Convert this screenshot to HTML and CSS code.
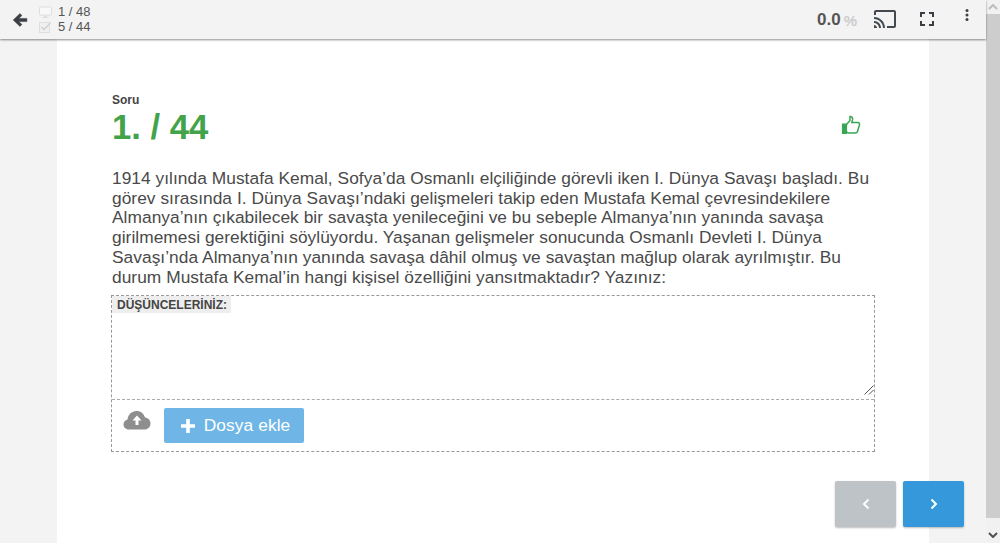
FILE: index.html
```html
<!DOCTYPE html>
<html lang="tr">
<head>
<meta charset="utf-8">
<title>Soru</title>
<link rel="stylesheet" href="styles.css">
</head>
<body>
<div class="app">
  <div class="main">
    <header class="topbar">
      <svg class="back" viewBox="0 0 16 16" width="16" height="16"><path d="M8 1.6 1.2 8 8 14.4l1.9-1.9-3-2.9h8v-3.2h-8l3-2.9z" fill="#3a3f45" stroke="#3a3f45" stroke-width=".5" stroke-linejoin="round"/></svg>
      <div class="counters">
        <div class="counter">
          <svg viewBox="0 0 13 12" width="13" height="12"><path d="M1 1h11a.5.5 0 0 1 .5.5v7a.5.5 0 0 1-.5.5H1a.5.5 0 0 1-.5-.5v-7A.5.5 0 0 1 1 1z" fill="#f8f8f8" stroke="#dedede"/><path d="M5 9.500h3V11h1.500v1h-6v-1H5z" fill="#dedede"/></svg>
          <span>1 / 48</span>
        </div>
        <div class="counter">
          <svg viewBox="0 0 13 12" width="13" height="12"><rect x=".5" y="1.500" width="10" height="10" fill="#f0f0f0" stroke="#dedede"/><path d="m2.500 6 2.500 2.500L11.500 2" fill="none" stroke="#d0d0d0" stroke-width="1.500"/></svg>
          <span>5 / 44</span>
        </div>
      </div>
      <div class="score"><b>0.0</b><span>%</span></div>
      <svg class="cast" viewBox="0 0 24 24" width="24" height="24"><path d="M21 3H3c-1.100 0-2 .9-2 2v3h2V5h18v14h-7v2h7c1.100 0 2-.9 2-2V5c0-1.100-.9-2-2-2zM1 18v3h3c0-1.660-1.340-3-3-3zm0-4v2c2.760 0 5 2.240 5 5h2c0-3.870-3.130-7-7-7zm0-4v2c4.970 0 9 4.030 9 9h2c0-6.080-4.930-11-11-11z" fill="#44494f"/></svg>
      <svg class="full" viewBox="0 0 24 24" width="24" height="24"><path d="M7 14H5v5h5v-2H7v-3zm-2-4h2V7h3V5H5v5zm12 7h-3v2h5v-5h-2v3zM14 5v2h3v3h2V5h-5z" fill="#3a3f45"/></svg>
      <svg class="dots" viewBox="0 0 4 12" width="4" height="12"><circle cx="2" cy="1.500" r="1.500" fill="#3a3f45"/><circle cx="2" cy="6" r="1.500" fill="#3a3f45"/><circle cx="2" cy="10.500" r="1.500" fill="#3a3f45"/></svg>
    </header>
    <div class="stage">
      <main class="card">
        <div class="head">
          <div>
            <div class="label">Soru</div>
            <div class="number">1. / 44</div>
          </div>
          <svg class="thumb" viewBox="0 0 20 20" width="20" height="20"><path d="M1.500 9h4v9.500h-4z" fill="#3aa655" stroke="#3aa655" stroke-width="1.200"/><path d="M5.500 9.500 9 5.500V1.500c2 0 3 1.500 2.500 3.500l-.7 2.500h6c1.500 0 2 1.200 1.600 2.500l-1.900 6.500c-.3 1-1 1.500-2 1.500H8c-1 0-1.700-.5-2.500-1" fill="none" stroke="#3aa655" stroke-width="1.500"/></svg>
        </div>
        <p class="question">1914 yılında Mustafa Kemal, Sofya’da Osmanlı elçiliğinde görevli iken I. Dünya Savaşı başladı. Bu görev sırasında I. Dünya Savaşı’ndaki gelişmeleri takip eden Mustafa Kemal çevresindekilere Almanya’nın çıkabilecek bir savaşta yenileceğini ve bu sebeple Almanya’nın yanında savaşa girilmemesi gerektiğini söylüyordu. Yaşanan gelişmeler sonucunda Osmanlı Devleti I. Dünya Savaşı’nda Almanya’nın yanında savaşa dâhil olmuş ve savaştan mağlup olarak ayrılmıştır. Bu durum Mustafa Kemal’in hangi kişisel özelliğini yansıtmaktadır? Yazınız:</p>
        <section class="answer">
          <div class="editor">
            <span class="tag">DÜŞÜNCELERİNİZ:</span>
            <svg class="grip" viewBox="0 0 10 10" width="10" height="10"><path d="M9.500.5l-9 9M9.500 5l-4.500 4.500" stroke="#555" fill="none"/></svg>
          </div>
          <div class="upload">
            <svg class="cloud" viewBox="0 0 28 20" width="28" height="20"><path d="M6 19.500C2.500 19.500.5 17 .5 14.500c0-2.500 1.700-4.500 4-5C5 5 8.500 1 13.500 1c4.200 0 7.500 2.700 8.500 6.500 3.300.3 5.500 3 5.500 6 0 3.500-2.700 6-6 6z" fill="#8e8e8e"/><path d="M14 5.500 9.500 10.500h3V15h3v-4.500h3z" fill="#fff"/></svg>
            <button class="add" type="button"><svg viewBox="0 0 14 14" width="14" height="14"><path d="M5.200 0h3.600v5.200H14v3.600H8.800V14H5.200V8.800H0V5.200h5.200z" fill="#fff"/></svg>Dosya ekle</button>
          </div>
        </section>
        <nav class="pager">
          <button class="page prev" type="button"><svg viewBox="0 0 8 12" width="8" height="12"><path d="M6.500 1.500 2 6l4.500 4.500" fill="none" stroke="#fff" stroke-width="2"/></svg></button>
          <button class="page next" type="button"><svg viewBox="0 0 8 12" width="8" height="12"><path d="M1.500 1.500 6 6l-4.500 4.500" fill="none" stroke="#fff" stroke-width="2"/></svg></button>
        </nav>
      </main>
    </div>
  </div>
  <aside class="scrollbar">
    <div class="arrow top"><svg viewBox="0 0 10 6" width="10" height="6"><path d="M1 5l4-4 4 4" fill="none" stroke="#bdbdbd" stroke-width="2"/></svg></div>
    <div class="track"></div>
    <div class="arrow"><svg viewBox="0 0 10 6" width="10" height="6"><path d="M1 1l4 4 4-4" fill="none" stroke="#505050" stroke-width="2"/></svg></div>
  </aside>
</div>
</body>
</html>
```
FILE: styles.css
```css
* { box-sizing: border-box; }
html, body { margin: 0; height: 100%; overflow: hidden; }
body { font-family: "Liberation Sans", Arial, sans-serif; color: #444; background: #f3f3f3; }
.app { display: flex; height: 543px; }
.main { flex: 1; display: flex; flex-direction: column; min-width: 0; }
.topbar { height: 39px; flex: none; display: flex; align-items: center; background: #f3f3f3; box-shadow: 0 1px 2px rgba(0,0,0,.45); position: relative; z-index: 2; padding-left: 12px; }
.back { margin-right: 11px; }
.counters { display: flex; flex-direction: column; font-size: 13px; line-height: 15px; color: #555; margin-bottom: 1px; }
.counter { display: flex; align-items: center; gap: 6px; }
.score { margin-left: auto; margin-right: 16px; font-size: 17px; color: #555; }
.score span { color: #ccc; font-size: 15px; font-weight: bold; margin-left: 3px; vertical-align: -1px; }
.cast { margin-right: 18px; margin-bottom: 1px; }
.full { margin-right: 26px; margin-bottom: 1px; }
.dots { margin-right: 17px; margin-bottom: 9px; }
.stage { flex: 1; padding: 0 57px; min-height: 0; }
.card { height: 100%; background: #fff; padding: 54px 54px 0 54px; }
.head { display: flex; justify-content: space-between; align-items: flex-start; padding-left: 1px; }
.label { font-size: 12px; font-weight: bold; line-height: 14px; color: #444; }
.number { font-size: 34.670px; font-weight: bold; line-height: 41px; color: #43a34a; }
.thumb { margin: 22px 14px 0 0; }
.question { margin: 21px 0 0; padding: 0 1px; font-size: 17.330px; letter-spacing: .04px; line-height: 19.700px; color: #4a4a4a; }
.answer { margin-top: 8px; border: 1px dashed #999; height: 157px; display: flex; flex-direction: column; }
.editor { height: 104px; flex: none; position: relative; border-bottom: 1px dashed #aaa; }
.tag { display: block; width: fit-content; background: #eee; font-size: 12px; font-weight: bold; line-height: 16px; padding: 1px 4px 0 5px; color: #444; }
.grip { position: absolute; right: 0; bottom: 4px; }
.upload { display: flex; align-items: flex-start; padding: 8px 0 0 11px; gap: 13px; }
.cloud { margin-top: 2px; }
.add { width: 140px; height: 35px; border: 0; border-radius: 2px; background: #6fb6e6; color: #fff; font: 17.330px "Liberation Sans", Arial, sans-serif; letter-spacing: .1px; display: flex; align-items: center; justify-content: center; gap: 9px; padding: 0 0 0 3px; }
.pager { display: flex; justify-content: flex-end; gap: 7px; margin: 29px -89px 0 0; }
.page { width: 61px; height: 46px; border: 0; border-radius: 2px; display: flex; align-items: center; justify-content: center; box-shadow: 0 1px 2px rgba(0,0,0,.25); padding: 0; }
.prev { background: #bdc3c7; }
.next { background: #3498db; }
.scrollbar { width: 14px; flex: none; display: flex; flex-direction: column; background: #f1f1f1; }
.arrow { height: 17px; flex: none; display: flex; align-items: center; justify-content: center; }
.arrow.top { height: 14px; }
.track { flex: 1; background: #cdcdcd; margin-bottom: 8px; }
```
